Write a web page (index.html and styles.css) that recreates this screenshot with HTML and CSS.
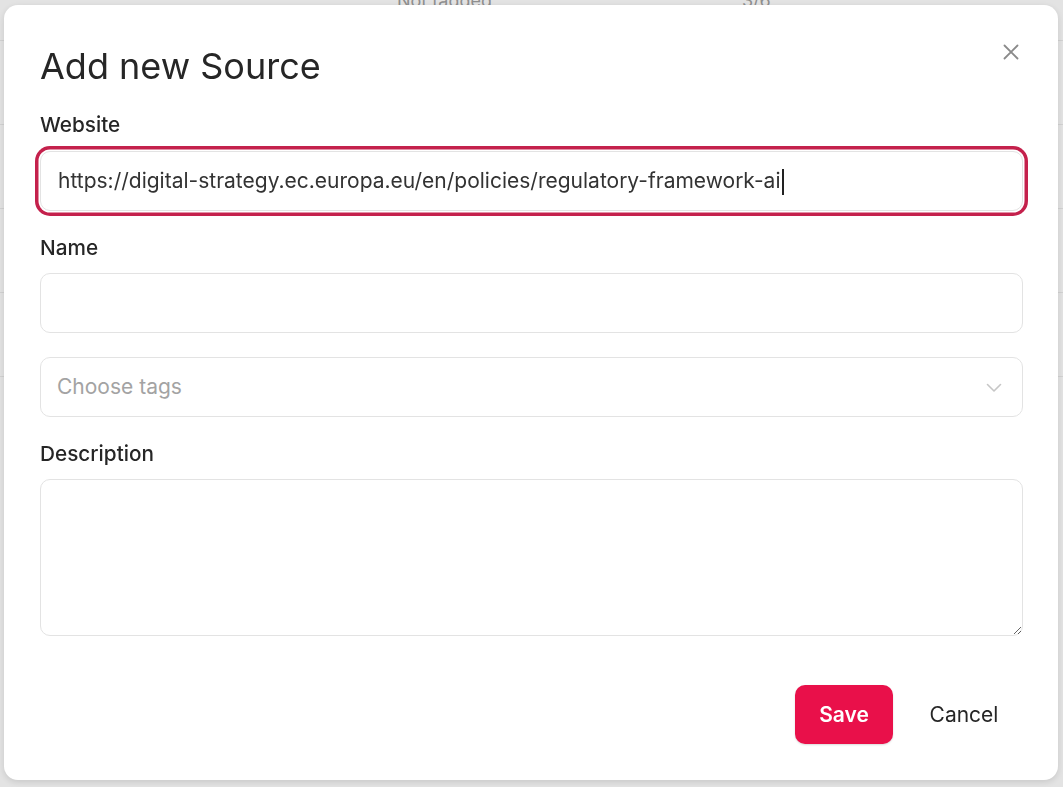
FILE: index.html
```html
<!DOCTYPE html>
<html lang="en">
<head>
<meta charset="utf-8">
<title>Add new Source</title>
<link rel="stylesheet" href="styles.css">
</head>
<body>
<div class="backdrop">
  <div class="bg-row bg-head"><span class="bg-tag">Not tagged</span><span class="bg-count">3/6</span></div>
  <div class="bg-row"></div>
  <div class="bg-row"></div>
  <div class="bg-row"></div>
  <div class="bg-row"></div>
</div>
<div class="modal" role="dialog" aria-labelledby="modal-title">
  <button class="close" type="button" aria-label="Close">
    <svg width="16" height="16" viewBox="0 0 16 16"><path d="M1.5 1.5 L14.5 14.5 M14.5 1.5 L1.5 14.5" stroke="#8a8a8a" stroke-width="1.8" stroke-linecap="round" fill="none"/></svg>
  </button>
  <h1 id="modal-title" class="title">Add new Source</h1>
  <form class="form">
    <label class="label" for="website">Website</label>
    <div class="field focused"><input id="website" class="input" type="text" value="https://digital-strategy.ec.europa.eu/en/policies/regulatory-framework-ai"><span class="caret"></span></div>
    <label class="label" for="name">Name</label>
    <div class="field"><input id="name" class="input" type="text"></div>
    <div class="field select spaced">
      <span class="placeholder">Choose tags</span>
      <svg class="chevron" width="16" height="10" viewBox="0 0 16 10"><path d="M1.5 1.5 L8 8 L14.5 1.5" stroke="#c6c6c6" stroke-width="1.6" fill="none" stroke-linecap="round" stroke-linejoin="round"/></svg>
    </div>
    <label class="label" for="description">Description</label>
    <textarea id="description" class="textarea"></textarea>
    <div class="actions">
      <button class="btn btn-save" type="button">Save</button>
      <button class="btn btn-cancel" type="button">Cancel</button>
    </div>
  </form>
</div>
</body>
</html>
```

FILE: styles.css
```css
* { box-sizing: border-box; }
html, body { margin: 0; height: 100%; }
body {
  font-family: Inter, "Noto Sans", "Liberation Sans", sans-serif;
  background: #e3e3e3;
  color: #262626;
  overflow: hidden;
}
.backdrop {
  display: flex;
  flex-direction: column;
}
.bg-row {
  height: 84px;
  border-bottom: 1px solid #d2d2d2;
}
.bg-head {
  height: 49px;
  display: flex;
  align-items: flex-start;
  font-size: 18px;
  color: #8f8f8f;
  line-height: 18px;
  margin-top: -8px;
}
.bg-tag { margin-left: 397px; }
.bg-count { margin-left: 250px; }

.modal {
  position: fixed;
  left: 4px;
  top: 5px;
  width: 1054px;
  height: 775px;
  background: #fff;
  border-radius: 14px;
  box-shadow: 0 2px 6px rgba(0,0,0,0.12);
  padding: 39px 35px 36px 36px;
  display: flex;
  flex-direction: column;
}
.close {
  position: absolute;
  top: 39px;
  right: 39px;
  width: 16px;
  height: 16px;
  padding: 0;
  border: 0;
  background: none;
  display: flex;
}
.title {
  margin: 0;
  font-size: 36px;
  line-height: 44px;
  font-weight: 400;
  color: #262626;
}
.form {
  display: flex;
  flex-direction: column;
  flex: 1;
}
.label {
  display: block;
  font-size: 20.75px;
  line-height: 28px;
  font-weight: 500;
  color: #262626;
  margin-top: 23px;
  margin-bottom: 11.5px;
}
.field {
  position: relative;
  height: 60px;
  border: 1px solid #e3e3e3;
  border-radius: 10px;
  display: flex;
  align-items: center;
  background: #fff;
}
.field.focused {
  box-shadow: 0 0 0 1.5px #fff, 0 0 0 5px #c4214c;
}
.field.spaced { margin-top: 23.5px; }
.input {
  flex: 1;
  height: 100%;
  border: 0;
  outline: none;
  background: transparent;
  font-family: inherit;
  font-size: 21px;
  color: #333;
  padding: 0 17px;
  border-radius: 10px;
}
.caret {
  position: absolute;
  left: 741px;
  top: 17px;
  width: 1.5px;
  height: 26px;
  background: #222;
}
.select {
  justify-content: space-between;
  padding: 0 20px 0 16px;
}
.placeholder {
  font-size: 21px;
  color: #a3a3a3;
}
.chevron { margin-top: 3px; }
.textarea {
  height: 157px;
  border: 1px solid #e3e3e3;
  border-radius: 10px;
  resize: vertical;
  font-family: inherit;
  font-size: 21px;
  padding: 14px 17px;
  outline: none;
}
.actions {
  margin-top: auto;
  display: flex;
  justify-content: flex-end;
  gap: 12px;
}
.btn {
  height: 59px;
  border-radius: 10px;
  font-family: inherit;
  font-size: 21px;
  border: 0;
  cursor: pointer;
}
.btn-save {
  width: 98px;
  background: #e9104a;
  color: #fff;
  font-weight: 600;
  box-shadow: 0 1px 2px rgba(0,0,0,0.15);
}
.btn-cancel {
  width: 118px;
  background: transparent;
  color: #262626;
  font-weight: 400;
}
```
